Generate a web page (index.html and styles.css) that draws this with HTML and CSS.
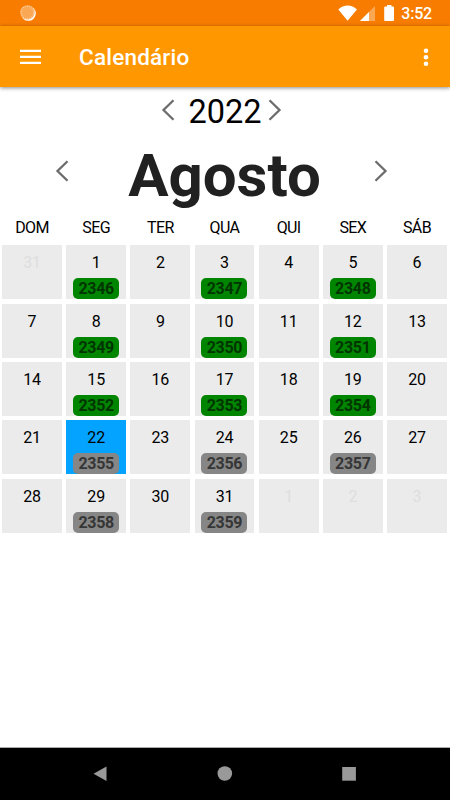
FILE: index.html
```
<!DOCTYPE html>
<html lang="pt">
<head>
    <meta charset="UTF-8">
    <meta name="viewport" content="width=device-width, initial-scale=1.0">
    <title>Calendário</title>
    <link rel="stylesheet" href="styles.css">
</head>
<body>
    <!-- Status Bar -->
    <div class="status-bar">
        <svg class="sync" width="16" height="16" viewBox="0 0 16 16">
            <circle cx="8.4" cy="8.4" r="7.4" fill="#fff"/>
            <circle cx="7.4" cy="7.4" r="7.2" fill="#fba855"/>
            <circle cx="7.4" cy="7.4" r="6.3" fill="none" stroke="#fdcc9a" stroke-width="1.2" stroke-dasharray="1.2 1"/>
        </svg>
        <div class="status-icons">
            <svg width="63" height="26" viewBox="0 0 63 26">
                <path d="M0.3 9.4C5.5 4.2 13.7 4.2 18.9 9.4L9.6 20.7Z" fill="#fff"/>
                <path d="M37 6V21H22Z" fill="#fba855"/>
                <path d="M31 12V21H22Z" fill="#fff"/>
                <path d="M49 5H53.4V6.5H55Q56 6.5 56 7.5V20Q56 21 55 21H47.2Q46.2 21 46.2 20V7.5Q46.2 6.5 47.2 6.5H49Z" fill="#fff"/>
            </svg>
            <span class="clock">3:52</span>
        </div>
    </div>

    <header class="app-bar">
        <svg width="22" height="16" viewBox="0 0 22 16" fill="#fff">
            <path d="M0 0.8H21V3H0ZM0 6.8H21V9H0ZM0 12.7H21V14.9H0Z"/>
        </svg>
        <h1>Calendário</h1>
        <svg class="more" width="6" height="20" viewBox="0 0 6 20" fill="#fff">
            <circle cx="3" cy="3.7" r="2.3"/>
            <circle cx="3" cy="10.2" r="2.3"/>
            <circle cx="3" cy="16.7" r="2.3"/>
        </svg>
    </header>

    <main>
        <!-- Year and month pickers -->
        <div class="year-picker">
            <svg class="arrow" viewBox="0 0 14 22"><path d="M12.5 1.2L2.5 11L12.5 20.8"/></svg>
            <span class="year">2022</span>
            <svg class="arrow" viewBox="0 0 14 22"><path d="M1.5 1.2L11.5 11L1.5 20.8"/></svg>
        </div>
        <div class="month-picker">
            <svg class="arrow" viewBox="0 0 14 22"><path d="M12.5 1.2L2.5 11L12.5 20.8"/></svg>
            <h2>Agosto</h2>
            <svg class="arrow" viewBox="0 0 14 22"><path d="M1.5 1.2L11.5 11L1.5 20.8"/></svg>
        </div>

        <div class="weekdays">
            <span>DOM</span>
            <span>SEG</span>
            <span>TER</span>
            <span>QUA</span>
            <span>QUI</span>
            <span>SEX</span>
            <span>SÁB</span>
        </div>

        <div class="days">
            <div class="day other">31</div>
            <div class="day">1<span class="badge done">2346</span></div>
            <div class="day">2</div>
            <div class="day">3<span class="badge done">2347</span></div>
            <div class="day">4</div>
            <div class="day">5<span class="badge done">2348</span></div>
            <div class="day">6</div>

            <div class="day">7</div>
            <div class="day">8<span class="badge done">2349</span></div>
            <div class="day">9</div>
            <div class="day">10<span class="badge done">2350</span></div>
            <div class="day">11</div>
            <div class="day">12<span class="badge done">2351</span></div>
            <div class="day">13</div>

            <div class="day">14</div>
            <div class="day">15<span class="badge done">2352</span></div>
            <div class="day">16</div>
            <div class="day">17<span class="badge done">2353</span></div>
            <div class="day">18</div>
            <div class="day">19<span class="badge done">2354</span></div>
            <div class="day">20</div>

            <div class="day">21</div>
            <div class="day today">22<span class="badge">2355</span></div>
            <div class="day">23</div>
            <div class="day">24<span class="badge">2356</span></div>
            <div class="day">25</div>
            <div class="day">26<span class="badge">2357</span></div>
            <div class="day">27</div>

            <div class="day">28</div>
            <div class="day">29<span class="badge">2358</span></div>
            <div class="day">30</div>
            <div class="day">31<span class="badge">2359</span></div>
            <div class="day other">1</div>
            <div class="day other">2</div>
            <div class="day other">3</div>
        </div>
    </main>

    <!-- Android navigation -->
    <nav class="nav-bar">
        <svg width="16" height="16" viewBox="0 0 16 16"><path d="M14.5 0.5V15L1.5 7.8Z"/></svg>
        <svg width="16" height="16" viewBox="0 0 16 16"><circle cx="7.8" cy="7.5" r="7.3"/></svg>
        <svg width="16" height="16" viewBox="0 0 16 16"><rect x="1.2" y="1" width="13.7" height="13.7"/></svg>
    </nav>
</body>
</html>
```
FILE: styles.css
```
/* Global Styles */
* {
    box-sizing: border-box;
}
body {
    font-family: Roboto, sans-serif;
    margin: 0;
    height: 100vh;
    display: flex;
    flex-direction: column;
    background: #fff;
    color: #000;
    overflow: hidden;
}
svg {
    display: block;
    flex: none;
}
/* Status Bar */
.status-bar {
    height: 26px;
    padding: 0 18px 0 20px;
    display: flex;
    justify-content: space-between;
    align-items: center;
    background: #f77c00;
    color: #fff;
}
.status-icons {
    display: flex;
    align-items: center;
}
.clock {
    font-size: 16px;
    font-weight: 500;
    line-height: 26px;
    padding-top: 2px;
    letter-spacing: -0.2px;
}
/* App Bar */
.app-bar {
    height: 61px;
    padding: 0 21px 0 20px;
    display: flex;
    align-items: center;
    background: #ff9800;
    color: #fff;
    box-shadow: 0 1px 4px rgba(0, 0, 0, 0.45);
}
.app-bar h1 {
    margin: 0 0 0 37px;
    font-size: 22.5px;
    font-weight: 500;
    letter-spacing: 0.2px;
}
.more {
    margin-left: auto;
}
/* Pickers */
main {
    flex: 1;
}
.arrow {
    width: 14px;
    height: 22px;
    fill: none;
    stroke: #6c6c6c;
    stroke-width: 2.3;
}
.year-picker {
    display: flex;
    justify-content: center;
    align-items: center;
    gap: 13px;
    height: 46px;
    padding-right: 7px;
}
.year {
    font-size: 32.5px;
    margin-right: -7px;
    padding-top: 3px;
}
.month-picker {
    display: flex;
    justify-content: space-between;
    align-items: center;
    height: 76px;
    padding: 0 62px 0 55px;
}
.month-picker h2 {
    margin: 10px 0 0 6px;
    font-size: 60px;
    line-height: 70px;
    font-weight: 700;
    color: #212121;
}
/* Calendar */
.weekdays, .days {
    display: grid;
    grid-template-columns: repeat(7, 1fr);
    gap: 4.2px;
    padding: 0 3px 0 2px;
    text-align: center;
}
.weekdays {
    height: 36.4px;
    font-size: 16px;
    line-height: 38px;
    letter-spacing: -0.6px;
}
.days {
    grid-auto-rows: 54.1px;
}
.day {
    display: flex;
    flex-direction: column;
    align-items: center;
    justify-content: space-between;
    padding-top: 8px;
    background: #ebebeb;
    font-size: 16px;
    line-height: 19px;
    letter-spacing: -0.2px;
}
.day.other {
    color: #dedede;
}
.day.today {
    background: #03a3ff;
}
.badge {
    width: 46px;
    height: 21px;
    border-radius: 5px;
    background: #868686;
    color: #363636;
    font-weight: 700;
    line-height: 22px;
    letter-spacing: -0.3px;
}
.badge.done {
    background: #008500;
    color: #003500;
}
/* Navigation Bar */
.nav-bar {
    height: 53px;
    padding: 0 93px 0 92px;
    display: flex;
    align-items: center;
    justify-content: space-between;
    background: #000;
    border-top: 1px solid #aaa;
}
.nav-bar svg {
    fill: #999;
}
```
